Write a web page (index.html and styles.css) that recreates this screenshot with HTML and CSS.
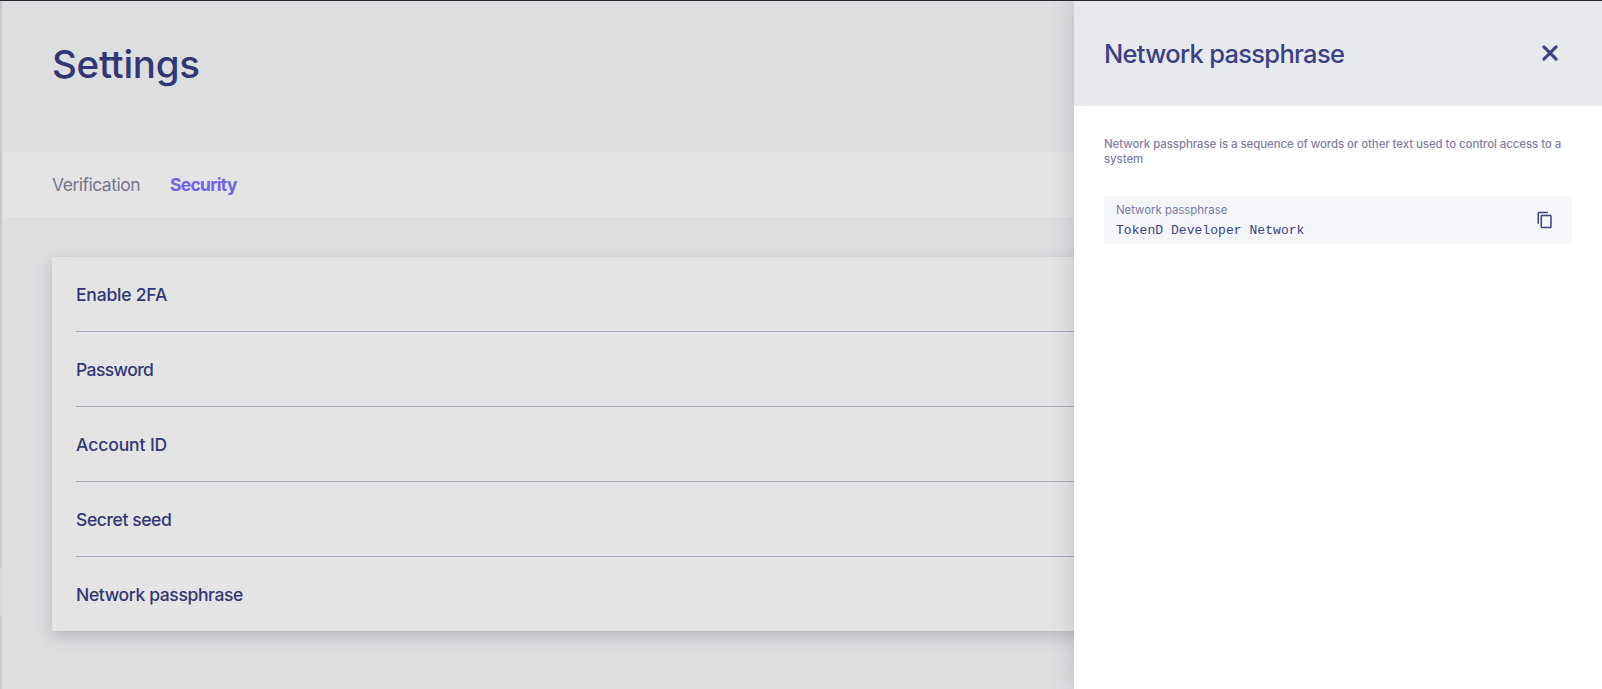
FILE: index.html
```html
<!DOCTYPE html>
<html lang="en">
<head>
<meta charset="utf-8">
<title>Settings</title>
<link rel="stylesheet" href="styles.css">
</head>
<body>
<div class="app">
  <aside class="sidebar-edge"><div class="sidebar-active"></div></aside>
  <main class="page">
    <header class="page-header"><h1 class="page-title">Settings</h1></header>
    <nav class="tabs">
      <a class="tab">Verification</a>
      <a class="tab tab-active">Security</a>
    </nav>
    <section class="card">
      <div class="row"><span class="t-2fa">Enable 2FA</span></div>
      <div class="row"><span class="t-password">Password</span></div>
      <div class="row"><span class="t-account">Account ID</span></div>
      <div class="row"><span class="t-seed">Secret seed</span></div>
      <div class="row"><span class="t-network">Network passphrase</span></div>
    </section>
  </main>
  <aside class="drawer">
    <header class="drawer-header">
      <h2 class="drawer-title">Network passphrase</h2>
      <svg class="close" viewBox="0 0 16 16"><path d="M1.9 1.9 14.1 14.1M14.1 1.9 1.9 14.1"/></svg>
    </header>
    <div class="drawer-body">
      <p class="description">Network passphrase is a sequence of words or other text used to control access to a<br>system</p>
      <div class="field">
        <div class="field-text">
          <span class="field-label">Network passphrase</span>
          <span class="field-value">TokenD Developer Network</span>
        </div>
        <svg class="copy" viewBox="0 0 24 24"><path d="M16 1H4c-1.1 0-2 .9-2 2v14h2V3h12V1zm3 4H8c-1.1 0-2 .9-2 2v14c0 1.1.9 2 2 2h11c1.1 0 2-.9 2-2V7c0-1.100-.9-2-2-2zm0 16H8V7h11v14z"/></svg>
      </div>
    </div>
  </aside>
</div>
</body>
</html>
```
FILE: styles.css
```css
* { box-sizing: border-box; }
body { margin: 0; font-family: Inter, "Liberation Sans", sans-serif; color: #323774; overflow: hidden; }
h1, h2, p { margin: 0; font-weight: 500; }
.app { display: flex; height: 689px; border-top: 1px solid #25232c; background: #dddee0; }
.sidebar-edge { width: 2px; flex: none; padding-top: 567px; background: #c9cacc; }
.sidebar-active { height: 48px; background: #d8d9dc; }
.page { width: 1072px; flex: none; overflow: hidden; }
.page-header { height: 151px; padding: 38px 50px 0; }
.page-title { font-size: 38.500px; line-height: 51px; letter-spacing: -0.3px; }
.tabs { height: 65px; display: flex; gap: 30px; padding: 0 50px; background: #e4e4e4; font-size: 17.500px; line-height: 65px; }
.tab { color: #77768d; letter-spacing: -0.5px; }
.tab-active { color: #7262e5; font-weight: 700; letter-spacing: -0.7px; }
.card { width: 1448px; height: 374px; margin: 40px 0 0 50px; padding: 0 24px; background: #e4e4e4; box-shadow: 0 5px 15px rgba(80, 82, 100, .28); }
.row { height: 75px; border-bottom: 1px solid #aaa9bb; font-size: 17.500px; font-weight: 500; line-height: 75px; }
.row:last-child { height: 74px; border: 0; }
.t-2fa { letter-spacing: -0.2px; }
.t-password { letter-spacing: -0.58px; }
.t-account { letter-spacing: -0.1px; }
.t-seed { letter-spacing: -0.4px; }
.t-network { letter-spacing: -0.36px; }
.drawer { position: relative; width: 528px; flex: none; background: #fff; box-shadow: 0 0 22px rgba(80, 82, 100, .25); color: #3b4182; }
.drawer-header { height: 105px; display: flex; justify-content: space-between; background: #e8e9ed; padding: 33px 44.500px 0 30px; }
.drawer-title { font-size: 25.500px; line-height: 40px; letter-spacing: -0.7px; }
.close { width: 16px; height: 16px; margin-top: 11px; fill: none; stroke: #3b4182; stroke-width: 3; stroke-linecap: round; }
.drawer-body { padding: 31px 30px 0; }
.description { font-size: 11.500px; line-height: 15px; letter-spacing: -0.1px; color: #837fa3; white-space: nowrap; }
.field { display: flex; justify-content: space-between; height: 48px; margin-top: 29px; padding: 5px 18px 0 12px; background: #f5f6fa; }
.field-text { display: flex; flex-direction: column; }
.field-label { font-size: 11.500px; line-height: 18px; letter-spacing: -0.07px; color: #7a7da9; }
.field-value { font-family: "Liberation Mono", monospace; font-size: 13px; line-height: 20px; letter-spacing: 0.05px; padding-top: 2px; }
.copy { width: 18px; height: 18px; margin-top: 10px; fill: #3b4182; }
```
